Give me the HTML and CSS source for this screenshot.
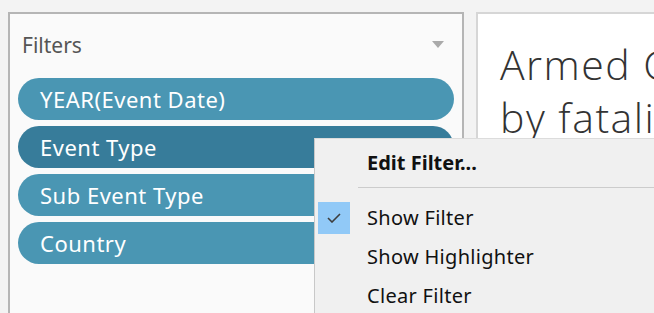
FILE: index.html
```html
<!DOCTYPE html>
<html lang="en">
<head>
  <meta charset="UTF-8" />
  <title>Filters</title>
  <link rel="stylesheet" href="styles.css">
</head>
<body>

<div class="workspace">
  <div class="filters-card">
    <div class="filters-header">
      <span class="filters-title">Filters</span>
      <span class="caret"></span>
    </div>
    <div class="pill">YEAR(Event Date)</div>
    <div class="pill active">Event Type</div>
    <div class="pill">Sub Event Type</div>
    <div class="pill">Country</div>
  </div>

  <div class="view-card">
    <h1 class="view-title">Armed Conflict<br />by fatalities</h1>
  </div>
</div>

<!-- context menu for the Event Type pill -->
<div class="menu">
  <div class="menu-item bold">Edit Filter...</div>
  <div class="menu-sep"></div>
  <div class="menu-item">
    <span class="check">
      <svg width="14" height="10" viewBox="0 0 14 10"><path d="M1 5 L5 9 L13 1" fill="none" stroke="#3d3d3d" stroke-width="1.6"/></svg>
    </span>
    Show Filter
  </div>
  <div class="menu-item">Show Highlighter</div>
  <div class="menu-item">Clear Filter</div>
</div>

</body>
</html>
```

FILE: styles.css
```css
body {
  margin: 0;
  padding: 0;
  background-color: #f3f3f3;
  font-family: 'Noto Sans', sans-serif;
  overflow: hidden;
  height: 313px;
}

.workspace {
  display: flex;
  gap: 12px;
  padding: 12px 0 0 8px;
}

.filters-card {
  width: 456px;
  height: 330px;
  flex-shrink: 0;
  background-color: #fafafa;
  border: 2px solid #b5b5b5;
  padding: 0 8px;
  box-sizing: border-box;
}

.filters-header {
  display: flex;
  justify-content: space-between;
  align-items: center;
  height: 64px;
  padding: 0 6px 0 4px;
}

.filters-title {
  font-size: 21px;
  color: #555;
  margin-top: -3px;
}

.caret {
  width: 0;
  height: 0;
  border-left: 6px solid transparent;
  border-right: 6px solid transparent;
  border-top: 7px solid #aaa;
  margin-right: 4px;
  margin-top: -4px;
}

.pill {
  height: 42px;
  border-radius: 21px;
  background-color: #4a96b3;
  color: #fff;
  font-size: 22px;
  letter-spacing: 0.5px;
  line-height: 42px;
  padding-left: 22px;
  margin-bottom: 6px;
}

.pill.active {
  background-color: #377c9a;
}

.view-card {
  flex: 1;
  height: 330px;
  background-color: #fff;
  border: 2px solid #d6d6d6;
  border-right: none;
  padding: 24px 0 0 22px;
  box-sizing: border-box;
  overflow: hidden;
}

.view-title {
  margin: 0;
  font-family: 'Open Sans', sans-serif;
  font-weight: 300;
  font-size: 41px;
  letter-spacing: 1.5px;
  line-height: 53px;
  color: #333;
  white-space: nowrap;
}

.menu {
  position: absolute;
  left: 314px;
  top: 138px;
  width: 360px;
  height: 200px;
  background-color: #f0f0f0;
  border-left: 1px solid #c8c8c8;
  border-top: 1px solid #dcdcdc;
  padding-top: 5px;
  font-family: 'Noto Sans', sans-serif;
  color: #111;
}

.menu-item {
  position: relative;
  height: 39px;
  line-height: 39px;
  font-size: 20px;
  letter-spacing: 0.3px;
  padding-left: 52px;
}

.menu-item.bold {
  font-weight: bold;
  letter-spacing: 0;
  height: 38px;
  line-height: 38px;
}

.menu-sep {
  height: 1px;
  background-color: #ccc;
  margin: 5px 0 10px 43px;
}

.check {
  position: absolute;
  left: 3px;
  top: 4px;
  width: 32px;
  height: 32px;
  background-color: #91c9f7;
  display: flex;
  align-items: center;
  justify-content: center;
}
```
